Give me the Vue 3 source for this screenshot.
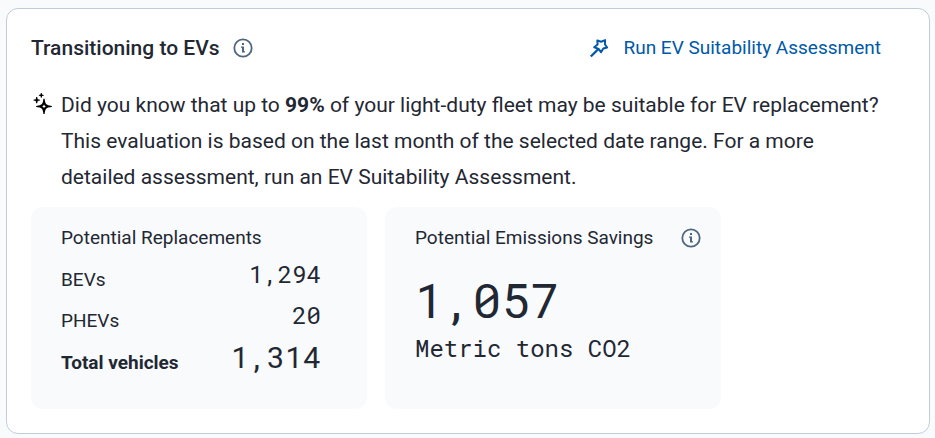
<script setup>
const replacements = [
  { label: 'BEVs', value: '1,294' },
  { label: 'PHEVs', value: '20' },
  { label: 'Total vehicles', value: '1,314', total: true },
]
</script>

<template>
  <section class="card" aria-labelledby="ev-title">
    <header class="header">
      <div class="heading">
        <h2 id="ev-title">Transitioning to EVs</h2>
        <button class="info" type="button" aria-label="About transitioning to EVs">
          <svg viewBox="0 0 20 20" width="20" height="20" aria-hidden="true">
            <circle cx="10" cy="10" r="8.7" fill="none" stroke="currentColor" stroke-width="1.8" />
            <path d="M9 5h2v2H9zM8 8.400h3v4.800h1v1.400H9v-4.800H8z" fill="currentColor" />
          </svg>
        </button>
      </div>
      <a class="run" href="#assessment">
        <svg viewBox="0 0 20 20" width="20" height="20" fill="none" stroke="currentColor" stroke-width="2" stroke-linejoin="round" aria-hidden="true">
          <path d="M8.300 2.500 12.200 3.700 16.100 2.100 15.900 6.200 18.100 9.500 14.300 10.500 12 14.200 9.600 10.900 5.200 9.300 8.600 6.500Z" />
          <path d="M9.400 11 1.800 18.500" stroke-width="2.400" />
        </svg>
        <span>Run EV Suitability Assessment</span>
      </a>
    </header>

    <div class="insight">
      <svg class="sparkle" viewBox="0 0 20 22" width="20" height="22" aria-hidden="true">
        <path fill-rule="evenodd" d="M11.400 5.800H12.600Q13.100 10.500 14.400 11.300 15.400 12.400 19.800 12.900V14Q15.400 14.400 14.400 15.500 13.100 16.500 12.600 21H11.400Q10.900 16.500 9.600 15.500 8.600 14.400 4.200 14V12.900Q8.600 12.400 9.600 11.300 10.900 10.500 11.400 5.800ZM12 11.500 11.300 12.700 10.100 13.400 11.300 14.100 12 15.300 12.700 14.100 13.900 13.400 12.700 12.700Z" />
        <path d="M4.200 4H5.200L5.700 6.300 7.900 6.700V7.500L5.700 7.900 5.200 10.200H4.200L3.700 7.900 1.500 7.500V6.700L3.700 6.300ZM8.900 0H9.700L10.100 1.600 11.700 2V2.700L10.100 3.100 9.700 4.700H8.900L8.500 3.100 6.900 2.700V2L8.500 1.600Z" />
      </svg>
      <p>
        Did you know that up to <strong>99%</strong> of your light-duty fleet may be suitable for EV
        replacement? This evaluation is based on the last month of the selected date range. For a more
        detailed assessment, run an EV Suitability Assessment.
      </p>
    </div>

    <div class="tiles">
      <section class="tile">
        <h3>Potential Replacements</h3>
        <dl>
          <div v-for="row in replacements" :key="row.label" class="row" :class="{ total: row.total }">
            <dt>{{ row.label }}</dt>
            <dd>{{ row.value }}</dd>
          </div>
        </dl>
      </section>
      <section class="tile">
        <div class="tile-head">
          <h3>Potential Emissions Savings</h3>
          <button class="info" type="button" aria-label="About potential emissions savings">
            <svg viewBox="0 0 20 20" width="20" height="20" aria-hidden="true">
              <circle cx="10" cy="10" r="8.7" fill="none" stroke="currentColor" stroke-width="1.8" />
              <path d="M9 5h2v2H9zM8 8.400h3v4.800h1v1.400H9v-4.800H8z" fill="currentColor" />
            </svg>
          </button>
        </div>
        <p class="figure">1,057</p>
        <p class="unit">Metric tons CO2</p>
      </section>
    </div>
  </section>
</template>

<style>
body {
  background: #f8fafc;
}
</style>

<style scoped>
.card {
  box-sizing: border-box;
  margin: 8px 5px 4px 6px;
  padding: 24px;
  border: 1px solid #c0ccda;
  border-radius: 12px;
  background: #fff;
  color: #1f2833;
  font-family: Roboto, sans-serif;
}
h2, h3, p, dl, dt, dd {
  margin: 0;
  font-weight: 400;
}
.header, .heading, .run, .tile-head {
  display: flex;
  align-items: center;
}
.header {
  justify-content: space-between;
  padding-right: 24px;
}
.heading {
  gap: 13px;
}
h2 {
  font-size: 21px;
  line-height: 30px;
  font-weight: 500;
}
.info {
  display: flex;
  padding: 0;
  border: 0;
  background: none;
  color: #4e677e;
  cursor: pointer;
}
.run {
  gap: 14px;
  color: #0059a8;
  font-size: 19px;
  line-height: 30px;
  text-decoration: none;
}
.insight {
  display: flex;
  gap: 9px;
  margin-top: 24px;
  padding: 0 24px 0 1px;
}
.sparkle {
  flex: none;
  margin-top: 6px;
}
.insight p {
  font-size: 21px;
  line-height: 36px;
}
strong {
  font-weight: 700;
}
.tiles {
  display: grid;
  grid-template-columns: repeat(2, minmax(0, 336px));
  gap: 18px;
  margin-top: 12px;
}
.tile {
  box-sizing: border-box;
  min-height: 202px;
  padding: 18px 20px 30px 30px;
  border-radius: 12px;
  background: #f8fafc;
}
.tile-head {
  justify-content: space-between;
}
h3 {
  font-size: 19px;
  line-height: 26px;
}
dl {
  padding: 5px 26px 0 0;
}
.row {
  display: flex;
  align-items: flex-start;
  justify-content: space-between;
  height: 41px;
}
dt {
  padding-top: 12px;
  font-size: 19px;
  line-height: 24px;
}
dd, .figure, .unit {
  font-family: "Roboto Mono", "DejaVu Sans Mono", monospace;
}
dd {
  font-size: 24px;
  line-height: 36px;
}
.total dt {
  font-weight: 700;
  line-height: 26px;
}
.total dd {
  font-size: 30px;
  line-height: 38px;
}
.figure {
  margin-top: 17px;
  font-size: 48px;
  line-height: 64px;
}
.unit {
  font-size: 24px;
  line-height: 32px;
}
</style>
